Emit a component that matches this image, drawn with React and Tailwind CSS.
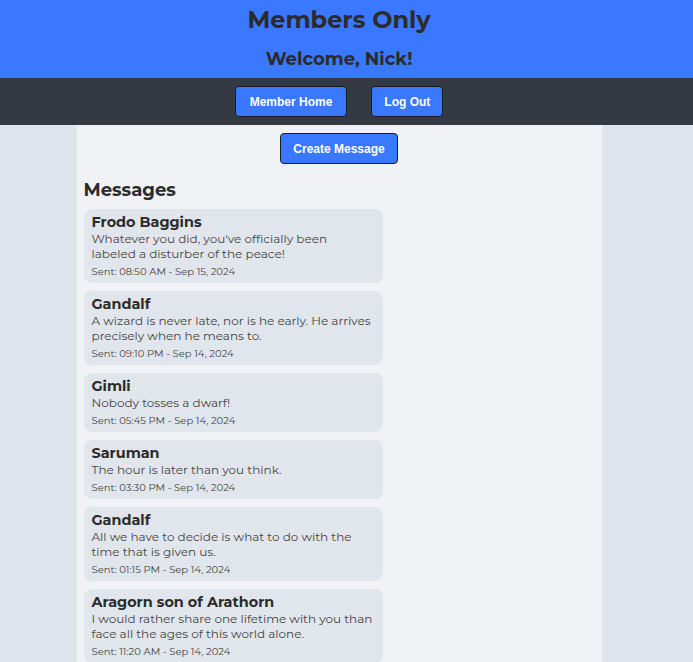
import React from "react";

const messages = [
  { name: "Frodo Baggins", text: "Whatever you did, you've officially been labeled a disturber of the peace!", sent: "Sent: 08:50 AM - Sep 15, 2024" },
  { name: "Gandalf", text: "A wizard is never late, nor is he early. He arrives precisely when he means to.", sent: "Sent: 09:10 PM - Sep 14, 2024" },
  { name: "Gimli", text: "Nobody tosses a dwarf!", sent: "Sent: 05:45 PM - Sep 14, 2024" },
  { name: "Saruman", text: "The hour is later than you think.", sent: "Sent: 03:30 PM - Sep 14, 2024" },
  { name: "Gandalf", text: "All we have to decide is what to do with the time that is given us.", sent: "Sent: 01:15 PM - Sep 14, 2024" },
  { name: "Aragorn son of Arathorn", text: "I would rather share one lifetime with you than face all the ages of this world alone.", sent: "Sent: 11:20 AM - Sep 14, 2024" },
];

const font = "font-['Montserrat','Open_Sans','Noto_Sans',sans-serif]";

function Btn({ children, className = "px-3" }) {
  return (
    <button className={`h-[31px] rounded-[4px] border border-[#1b1d22] bg-[#3a78ff] text-white text-[12px] font-bold font-['Liberation_Sans',Arial,sans-serif] ${className}`}>
      {children}
    </button>
  );
}

export default function App() {
  return (
    <div className={`h-[662px] overflow-hidden bg-[#e0e4ec] text-[#2b2b2b] ${font}`}>
      <header className="bg-[#3a78ff] h-[78px] pr-[15px] flex flex-col items-center">
        <h1 className="text-[24px] font-bold leading-[40px]">Members Only</h1>
        <h2 className="text-[18px] font-bold leading-[38px]">Welcome, Nick!</h2>
      </header>
      <nav className="bg-[#353a42] h-[47px] pr-[15px] flex items-center justify-center gap-6">
        <Btn className="px-[14px]">Member Home</Btn>
        <Btn className="px-3">Log Out</Btn>
      </nav>
      <div className="w-[678px]">
        <main className="w-[525px] mx-auto bg-[#f0f2f6] px-[7px] pt-2 min-h-[600px]">
          <div className="flex justify-center">
            <Btn>Create Message</Btn>
          </div>
          <h2 className="text-[18px] font-bold leading-[24px] mt-[14px] mb-[7px]">Messages</h2>
          <div className="flex flex-col gap-2">
            {messages.map((m, i) => (
              <div key={i} className="w-[299px] rounded-[8px] bg-[#e1e5ec] px-2 pt-1 pb-1">
                <div className="text-[14.4px] font-bold leading-[18px] text-[#2b2b2b]">{m.name}</div>
                <div className="text-[12px] leading-[15px] text-[#454545]">{m.text}</div>
                <div className="text-[10px] leading-[14px] mt-1 text-[#454545]">{m.sent}</div>
              </div>
            ))}
          </div>
        </main>
      </div>
    </div>
  );
}
